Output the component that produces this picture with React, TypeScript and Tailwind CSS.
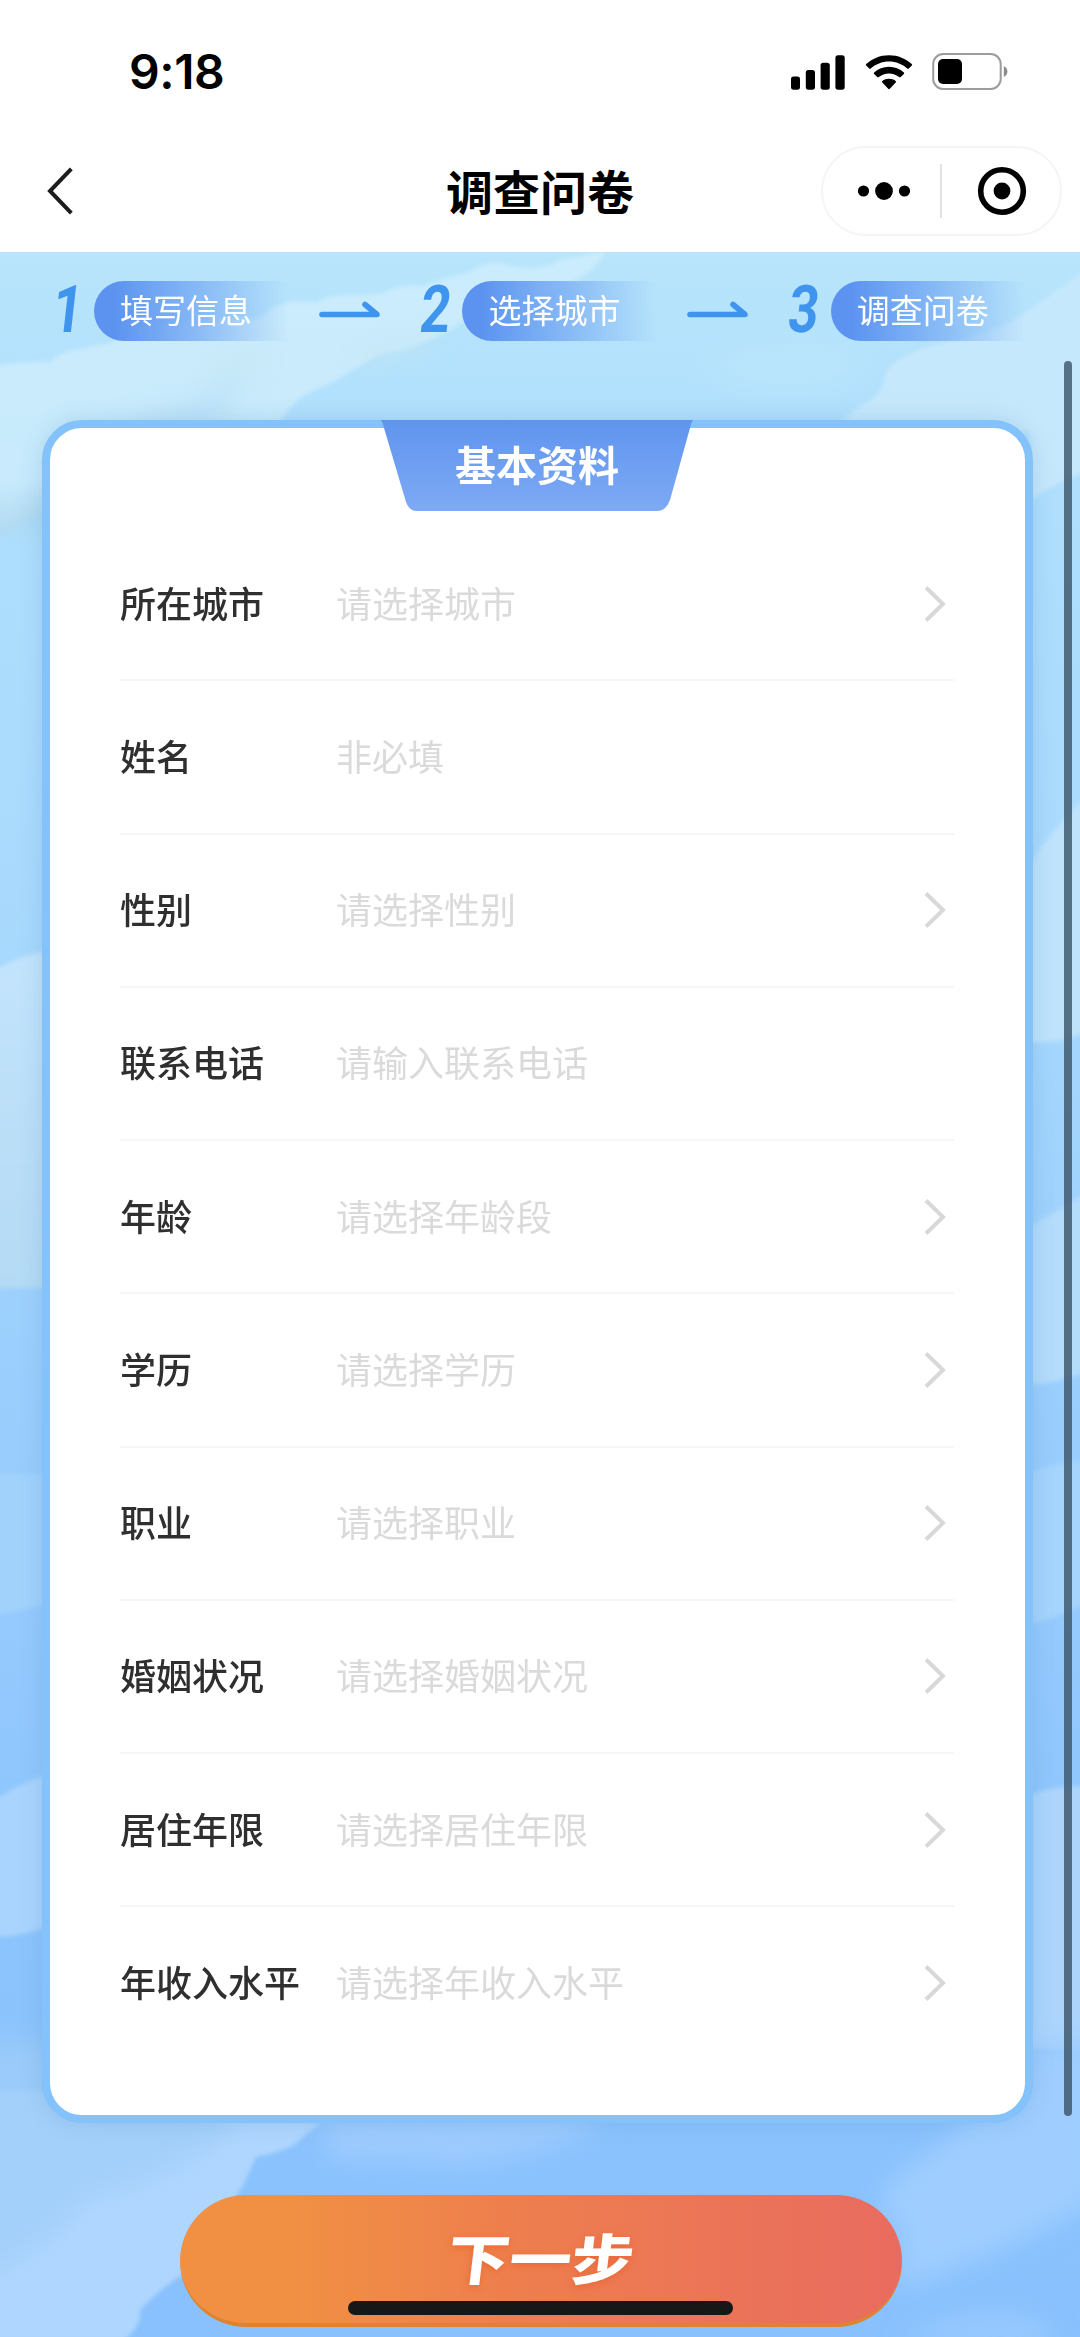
import React from "react";

type Field = { label: string; hint: string; select: boolean };

const fields: Field[] = [
  { label: "所在城市", hint: "请选择城市", select: true },
  { label: "姓名", hint: "非必填", select: false },
  { label: "性别", hint: "请选择性别", select: true },
  { label: "联系电话", hint: "请输入联系电话", select: false },
  { label: "年龄", hint: "请选择年龄段", select: true },
  { label: "学历", hint: "请选择学历", select: true },
  { label: "职业", hint: "请选择职业", select: true },
  { label: "婚姻状况", hint: "请选择婚姻状况", select: true },
  { label: "居住年限", hint: "请选择居住年限", select: true },
  { label: "年收入水平", hint: "请选择年收入水平", select: true },
];

const steps = ["填写信息", "选择城市", "调查问卷"];

function StatusBar() {
  return (
    <div className="flex h-[130px] items-start justify-between pl-[129px] pr-[72px]">
      <span className="mt-[42px] font-['Inter'] text-[48px] font-semibold leading-[60px] tracking-[-0.4px] text-black">
        9:18
      </span>
      <div className="mt-[53px] flex items-center">
        <svg className="block h-9 w-[54px]" viewBox="0 0 54 36">
          <rect x="0" y="22.5" width="9" height="13.2" rx="2.6" />
          <rect x="14.8" y="16" width="9.2" height="19.7" rx="2.6" />
          <rect x="29.6" y="8.7" width="9.2" height="27" rx="2.6" />
          <rect x="44.4" y="1.2" width="9.3" height="34.5" rx="2.6" />
        </svg>
        <svg className="ml-[20px] block h-9 w-[48px]" viewBox="0 0 48 36">
          <path d="M24 1.2C15 1.2 7 4.6 1.2 10.1c-.5.5-.5 1 0 1.5l3 3c.5.5 1 .5 1.5 0C10.5 10.3 17 7.6 24 7.6s13.5 2.7 18.3 7c.5.5 1 .5 1.5 0l3-3c.5-.5.5-1 0-1.5C41 4.6 33 1.2 24 1.2Z" />
          <path d="M24 12.8c-5.7 0-10.9 2.1-14.9 5.6-.5.5-.5 1 0 1.5l3.2 3.2c.5.5 1 .5 1.5 0 2.7-2.3 6.3-3.7 10.2-3.7s7.5 1.4 10.2 3.7c.5.5 1 .5 1.5 0l3.2-3.2c.5-.5.5-1 0-1.5-4-3.5-9.2-5.6-14.9-5.6Z" />
          <path d="M24 24.800c-2.600 0-4.900.800-6.700 2.300-.5.500-.5 1 0 1.500l5.900 6.200c.5.500 1.100.500 1.600 0l5.900-6.200c.5-.5.5-1 0-1.500-1.800-1.500-4.100-2.300-6.700-2.300Z" />
        </svg>
        <svg className="ml-[19px] block h-[37px] w-[76px]" viewBox="0 0 76 37">
          <rect x="1.200" y="1" width="67.500" height="35" rx="10" fill="none" stroke="#9c9c9c" strokeWidth="2" />
          <rect x="6" y="6" width="24" height="25" rx="5" />
          <path d="M71.800 13.200c4.800 1.600 4.800 9 0 10.600Z" fill="#8c8c8c" />
        </svg>
      </div>
    </div>
  );
}

function NavBar() {
  return (
    <div className="grid h-[122px] grid-cols-3 items-center pl-[46px] pr-[18px]">
      <svg className="block h-[48px] w-[28px]" viewBox="0 0 28 48" fill="none" stroke="#1c1c1c" strokeWidth="4">
        <path d="M25.300 1.800 4 24l21.300 22.200" />
      </svg>
      <h1 className="-ml-[28px] -mt-[3px] whitespace-nowrap text-center text-[47px] font-semibold leading-[60px] text-black">
        调查问卷
      </h1>
      <div className="flex h-[90px] w-[241px] items-center justify-self-end rounded-full border-2 border-[#f5f5f5]">
        <svg className="ml-[34px] block h-5 w-[54px]" viewBox="0 0 54 20">
          <circle cx="6.500" cy="10" r="5.600" />
          <circle cx="27" cy="10" r="8.900" />
          <circle cx="47.500" cy="10" r="5.600" />
        </svg>
        <div className="ml-[29px] h-[54px] w-[2px] bg-[#e2e2e2]" />
        <svg className="ml-[35px] block h-[50px] w-[50px]" viewBox="0 0 50 50">
          <circle cx="25" cy="25" r="21.300" fill="none" stroke="#000" strokeWidth="5.600" />
          <circle cx="25" cy="25" r="8.400" />
        </svg>
      </div>
    </div>
  );
}

function Sky() {
  return (
    <svg className="absolute inset-0 block h-full w-full" viewBox="0 252 1080 2085" preserveAspectRatio="none">
      <defs>
        <linearGradient id="sky" x1="0" y1="0" x2="0" y2="1">
          <stop offset="0" stopColor="#b8e5fb" />
          <stop offset="0.080" stopColor="#b1e0fd" />
          <stop offset="0.300" stopColor="#a9dafd" />
          <stop offset="0.550" stopColor="#9acefd" />
          <stop offset="0.800" stopColor="#8cc4fd" />
          <stop offset="1" stopColor="#88c1fd" />
        </linearGradient>
        <linearGradient id="cloudA" x1="0" y1="0" x2="0" y2="1">
          <stop offset="0" stopColor="#cbecfd" />
          <stop offset="0.800" stopColor="#c8eafc" />
          <stop offset="1" stopColor="#aed8f1" />
        </linearGradient>
        <linearGradient id="cloudB" x1="0" y1="0" x2="0" y2="1">
          <stop offset="0" stopColor="#c3e4fc" />
          <stop offset="1" stopColor="#b4daf4" />
        </linearGradient>
        <filter id="soft" x="-20%" y="-20%" width="140%" height="140%">
          <feGaussianBlur stdDeviation="12" />
        </filter>
        <filter id="edge" x="-10%" y="-10%" width="120%" height="120%">
          <feGaussianBlur stdDeviation="2" />
        </filter>
      </defs>
      <rect x="0" y="252" width="1080" height="2085" fill="url(#sky)" />
      {/* upper left bank */}
      <g filter="url(#edge)">
        <path
          d="M-10 366Q20 361 50 362Q62 350 82 349Q98 345 112 343Q140 320 170 322L260 318Q280 296 315 303Q330 294 348 295Q370 296 384 292Q400 284 422 286Q446 278 470 272Q490 258 510 266Q540 272 560 260L600 252H606Q590 276 560 288L470 318Q420 350 380 354Q350 372 330 384Q290 396 276 430L50 470L60 480Q46 520 -10 540Z"
          fill="url(#cloudA)"
        />
      </g>
      <g filter="url(#soft)">
        <ellipse cx="235" cy="368" rx="36" ry="8" fill="#c5e8f2" transform="rotate(-18 235 368)" />
        <path d="M130 422Q190 408 234 380L240 392Q222 410 206 434H130Z" fill="#b8dff8" opacity="0.800" />
        <ellipse cx="395" cy="350" rx="46" ry="6" fill="#c5e6f2" transform="rotate(-14 395 350)" />
        <path d="M14 530L44 484V530H0Z" fill="#abd6ed" />
      </g>
      {/* upper right bank */}
      <g filter="url(#edge)">
        <path d="M1090 268Q1056 290 1030 310Q1000 330 966 338Q900 350 886 372Q884 396 860 406Q840 420 834 432H1030V500Q1060 480 1090 470Z" fill="#c6e8fc" />
      </g>
      <g filter="url(#soft)">
        <path d="M700 362Q760 330 860 345L850 380Q770 410 700 362Z" fill="#b9e5fc" />
      </g>
      {/* left edge */}
      <g filter="url(#edge)">
        <path d="M-10 974Q20 952 60 950V1288H0L-10 1296Z" fill="url(#cloudB)" />
        <path d="M-10 1474H60V1600Q30 1610 -10 1616Z" fill="#a1d2fc" />
        <path d="M-10 1802Q30 1778 60 1770V1922Q30 1936 -10 1938Z" fill="#a9d4fd" />
      </g>
      {/* right edge */}
      <g filter="url(#edge)">
        <path d="M1020 880Q1040 842 1090 792V1030Q1060 1046 1020 1042Z" fill="#bfe3fb" />
        <path d="M1020 1232Q1050 1216 1090 1190V1370Q1060 1384 1020 1386Z" fill="#b4dcfb" />
        <path d="M1020 1476Q1060 1460 1090 1460V1600Q1060 1620 1020 1626Z" fill="#a5d4fc" />
        <path d="M1020 1800Q1040 1786 1090 1786V2050H1020Z" fill="#add5fc" />
      </g>
      <g filter="url(#soft)">
        <path d="M1020 2050L1100 2030V2200Q1010 2250 900 2290V2230Q860 2200 910 2165Q960 2140 1020 2050Z" fill="#9fcdff" />
        <path d="M900 2344Q950 2300 1040 2320L1060 2350Z" fill="#98c9fe" />
        <path d="M320 2110Q420 2102 560 2108L610 2120Q530 2160 460 2166Q380 2158 330 2160Z" fill="#9dcbfe" />
      </g>
      {/* lower left bank */}
      <g filter="url(#edge)">
        <path
          d="M-10 2090H60L322 2123Q304 2134 296 2144Q276 2154 256 2157Q248 2174 244 2184L230 2206L190 2270Q160 2288 140 2310Q142 2326 124 2340H-10Z"
          fill="#afd6fe"
        />
      </g>
      <g filter="url(#soft)">
        <path d="M-30 2040H50L240 2120Q180 2180 90 2195Q50 2250 -30 2280Z" fill="#9fcdf8" opacity="0.750" />
      </g>
    </svg>
  );
}

function Steps() {
  return (
    <div className="flex h-[60px] items-center">
      {steps.map((step, i) => (
        <React.Fragment key={step}>
          <span className="flex w-[42px] justify-center pr-[3px] font-['Roboto'] text-[66px] font-bold leading-[60px] text-[#3f95ee]">
            <span className="-mt-[2px] inline-block -skew-x-[8deg] scale-x-[0.8]">{i + 1}</span>
          </span>
          <span className="ml-[4px] flex h-[60px] w-[202px] items-center rounded-l-full bg-linear-to-r from-[#5c93f0] from-10% via-[#78acf3]/80 via-50% to-[#9fd0fa]/0 to-96% pb-[3px] pl-[26px] text-[33px] leading-[57px] text-white">
            {step}
          </span>
          {i < 2 && (
            <svg className="ml-[23px] mr-[35.4px] block h-[20px] w-[62px]" viewBox="0 0 62 20" fill="none" stroke="#3f95ee" strokeWidth="5.600" strokeLinecap="round" strokeLinejoin="round">
              <path d="M3 13.500H58L46 3.500" />
            </svg>
          )}
        </React.Fragment>
      ))}
    </div>
  );
}

function Row({ field }: { field: Field }) {
  return (
    <div className="flex h-[153.25px] items-center border-b-2 border-[#f6f6f6] last:border-transparent">
      <span className="-mt-[4px] w-[216px] whitespace-nowrap text-[36px] font-medium leading-[54px] text-[#2f2f2f]">{field.label}</span>
      <span className="-mt-[4px] flex-1 text-[36px] font-normal leading-[54px] text-[#dadada]">{field.hint}</span>
      {field.select && (
        <svg className="mr-[8px] block h-[38px] w-[22px]" viewBox="0 0 22 38" fill="none" stroke="#d8d8d8" strokeWidth="4">
          <path d="M2 2.500 19 19 2 35.500" />
        </svg>
      )}
    </div>
  );
}

export default function App() {
  return (
    <div className="relative flex h-[2337px] w-[1080px] flex-col overflow-hidden bg-white font-['Noto_Sans_CJK_SC',sans-serif]">
      <header className="h-[252px]">
        <StatusBar />
        <NavBar />
      </header>
      <main className="relative flex-1 overflow-hidden">
        <Sky />
        <div className="relative flex flex-col pl-[42px] pr-[47px] pt-[29px]">
          <div className="pl-[6px]">
            <Steps />
          </div>
          <section className="mt-[79px] flex h-[1703px] flex-col rounded-[40px] border-8 border-[#83c2fa] bg-white pl-[70px] pr-[71px] shadow-[0_0_22px_rgba(80,140,190,0.24)]">
            <div className="relative -mt-[8px] flex h-[91px] w-[312px] items-center justify-center self-center">
              <svg className="absolute inset-0 block h-full w-full" viewBox="0 0 312 91">
                <defs>
                  <linearGradient id="tab" x1="0" y1="0" x2="0" y2="1">
                    <stop offset="0" stopColor="#5f94ee" />
                    <stop offset="1" stopColor="#7eaaf5" />
                  </linearGradient>
                </defs>
                <path d="M0 0H312Q310 3 309 8L289 80Q285 91 276 91H36Q28 91 25 82L3 8Q2 3 0 0Z" fill="url(#tab)" />
              </svg>
              <h2 className="relative -mt-[5px] text-[41px] font-bold leading-[60px] text-white">基本资料</h2>
            </div>
            <div className="mt-[17px]">
              {fields.map((field) => (
                <Row key={field.label} field={field} />
              ))}
            </div>
          </section>
          <button className="ml-[138px] mt-[72px] flex h-[132px] w-[722px] items-center justify-center rounded-full border-b-4 border-[#de8430] bg-linear-to-r from-[#f19043] from-15% via-[#ee7f4d] via-45% to-[#e96b5f] text-white">
            <span className="-mt-[6px] inline-block -skew-x-[6deg] scale-y-[0.88] text-[62px] font-black leading-[80px] [text-shadow:0_3px_8px_rgba(230,90,30,0.6)]">
              下一步
            </span>
          </button>
        </div>
        <div className="absolute right-[8px] top-[109px] h-[1755px] w-[8px] rounded-full bg-[#3a5266]/80" />
        <div className="absolute bottom-[22px] left-[348px] h-[14px] w-[385px] rounded-full bg-[#171717]" />
      </main>
    </div>
  );
}
